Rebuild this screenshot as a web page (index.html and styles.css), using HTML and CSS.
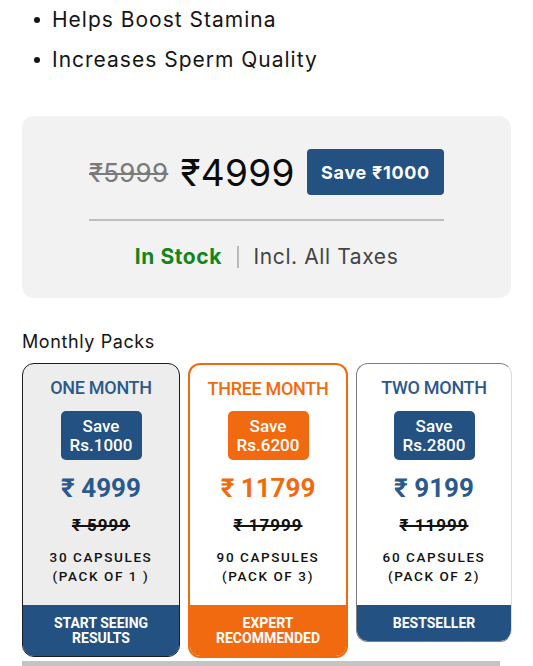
FILE: index.html
```html
<!DOCTYPE html>
<html>
<head>
<meta charset="utf-8">
<link rel="stylesheet" href="styles.css">
</head>
<body>
<div class="page">
  <ul class="bullets">
    <li>Helps Boost Stamina</li>
    <li>Increases Sperm Quality</li>
  </ul>

  <section class="price-box">
    <div class="price-inner">
      <div class="price-row">
        <span class="old-price">₹5999</span>
        <span class="new-price">₹4999</span>
        <span class="save-btn">Save ₹1000</span>
      </div>
      <div class="divider"></div>
      <div class="stock-row">
        <span class="in-stock">In Stock</span>
        <span class="sep"></span>
        <span class="taxes">Incl. All Taxes</span>
      </div>
    </div>
  </section>

  <h2 class="packs-title">Monthly Packs</h2>

  <div class="packs">
    <div class="pack pack-one">
      <div class="pack-name">ONE MONTH</div>
      <div class="badge">Save<br>Rs.1000</div>
      <div class="pack-price">₹ 4999</div>
      <div class="pack-old">₹ 5999</div>
      <div class="pack-qty">30 CAPSULES<br>(PACK OF 1 )</div>
      <div class="banner">START SEEING<br>RESULTS</div>
    </div>
    <div class="pack pack-three">
      <div class="pack-name">THREE MONTH</div>
      <div class="badge">Save<br>Rs.6200</div>
      <div class="pack-price">₹ 11799</div>
      <div class="pack-old">₹ 17999</div>
      <div class="pack-qty">90 CAPSULES<br>(PACK OF 3)</div>
      <div class="banner">EXPERT<br>RECOMMENDED</div>
    </div>
    <div class="pack pack-two">
      <div class="pack-name">TWO MONTH</div>
      <div class="badge">Save<br>Rs.2800</div>
      <div class="pack-price">₹ 9199</div>
      <div class="pack-old">₹ 11999</div>
      <div class="pack-qty">60 CAPSULES<br>(PACK OF 2)</div>
      <div class="banner">BESTSELLER</div>
    </div>
  </div>
  <div class="scrollbar"></div>
</div>
</body>
</html>
```

FILE: styles.css
```css
* { box-sizing: border-box; }
html, body { margin: 0; padding: 0; background: #fff; }
body {
  font-family: "Inter", "Noto Sans", "DejaVu Sans", sans-serif;
  color: #111;
  overflow: hidden;
}
.page {
  padding: 0 22px;
  width: 533px;
}
.bullets {
  list-style: none;
  margin: 0;
  padding: 0;
}
.bullets li {
  display: flex;
  align-items: center;
  font-size: 21px;
  letter-spacing: 1px;
  line-height: 26px;
  height: 40px;
  padding-left: 12px;
  color: #151515;
}
.bullets li::before {
  content: "";
  width: 6px;
  height: 6px;
  border-radius: 50%;
  background: #151515;
  margin-right: 12px;
  flex: none;
}
.price-box {
  margin-top: 36px;
  background: #f2f2f2;
  border-radius: 12px;
  height: 182px;
  padding-top: 32px;
}
.price-inner {
  width: 355px;
  margin: 0 auto;
}
.price-row {
  display: flex;
  align-items: center;
  justify-content: space-between;
  height: 48px;
}
.old-price {
  font-size: 26px;
  color: #7a7a7a;
  text-decoration: line-through;
  text-decoration-thickness: 1.5px;
  letter-spacing: 0.2px;
}
.new-price {
  font-size: 37px;
  color: #0c0c0c;
  letter-spacing: 0.3px;
}
.save-btn {
  background: #235181;
  color: #fff;
  font-weight: 700;
  font-size: 18px;
  letter-spacing: 0.7px;
  border-radius: 4px;
  width: 137px;
  height: 46px;
  display: flex;
  align-items: center;
  justify-content: center;
}
.divider {
  height: 1.5px;
  background: #bdbdbd;
  margin-top: 23px;
}
.stock-row {
  display: flex;
  align-items: center;
  justify-content: center;
  margin-top: 22px;
  height: 28px;
  font-size: 21px;
  letter-spacing: 0.6px;
}
.in-stock { color: #15841d; font-weight: 700; }
.sep {
  width: 1.5px;
  height: 22px;
  background: #bbb;
  margin: 0 15px;
}
.taxes { color: #444; }
.packs-title {
  font-weight: 400;
  font-size: 18px;
  letter-spacing: 0.6px;
  margin: 0;
  padding-top: 33px;
  line-height: 22px;
  color: #151515;
}
.packs {
  display: flex;
  align-items: flex-start;
  gap: 8px;
  margin-top: 10px;
  margin-right: -30px;
}
.pack {
  flex: none;
  width: 158px;
  border-radius: 12px;
  border: 1.5px solid #222;
  text-align: center;
  font-family: "Roboto", "Noto Sans", sans-serif;
  padding-top: 13px;
  overflow: hidden;
  background: #fff;
}
.pack-one { background: #ededed; border-color: #1d1d1d; }
.pack-three { width: 160px; border: 2px solid #f26a0f; }
.pack-two { width: 156px; border: 1px solid #7d7d7d; border-right-color: #ddd; }
.pack-name {
  font-size: 18px;
  font-weight: 500;
  line-height: 22px;
  color: #2a5a8b;
  letter-spacing: -0.3px;
}
.badge {
  margin: 12px auto 0;
  width: 81px;
  height: 49px;
  border-radius: 5px;
  background: #235181;
  color: #fff;
  font-size: 17px;
  font-weight: 500;
  line-height: 19px;
  padding-top: 5.5px;
}
.pack-price {
  margin-top: 13px;
  font-size: 26px;
  font-weight: 700;
  line-height: 30px;
  color: #2a5a8b;
}
.pack-old {
  margin-top: 11px;
  font-size: 17px;
  font-weight: 700;
  line-height: 22px;
  color: #111;
  letter-spacing: 1px;
  text-decoration: line-through;
  text-decoration-thickness: 1.5px;
}
.pack-qty {
  margin-top: 12px;
  font-size: 13.5px;
  font-weight: 500;
  line-height: 19px;
  letter-spacing: 1.6px;
  color: #111;
}
.banner {
  margin: 19px -2px 0;
  background: #235181;
  color: #fff;
  font-size: 14px;
  font-weight: 700;
  line-height: 15px;
  padding: 11px 4px 10px;
  border-radius: 0 0 12px 12px;
}
.pack-three .pack-name,
.pack-three .pack-price { color: #f26a0f; }
.pack-three .badge { background: #f26a0f; }
.pack-three .banner { background: #f26a0f; }
.pack-three .badge { margin-top: 11px; }
.scrollbar {
  margin-top: 3px;
  width: 478px;
  height: 5px;
  background: #c4c4c4;
}
```
